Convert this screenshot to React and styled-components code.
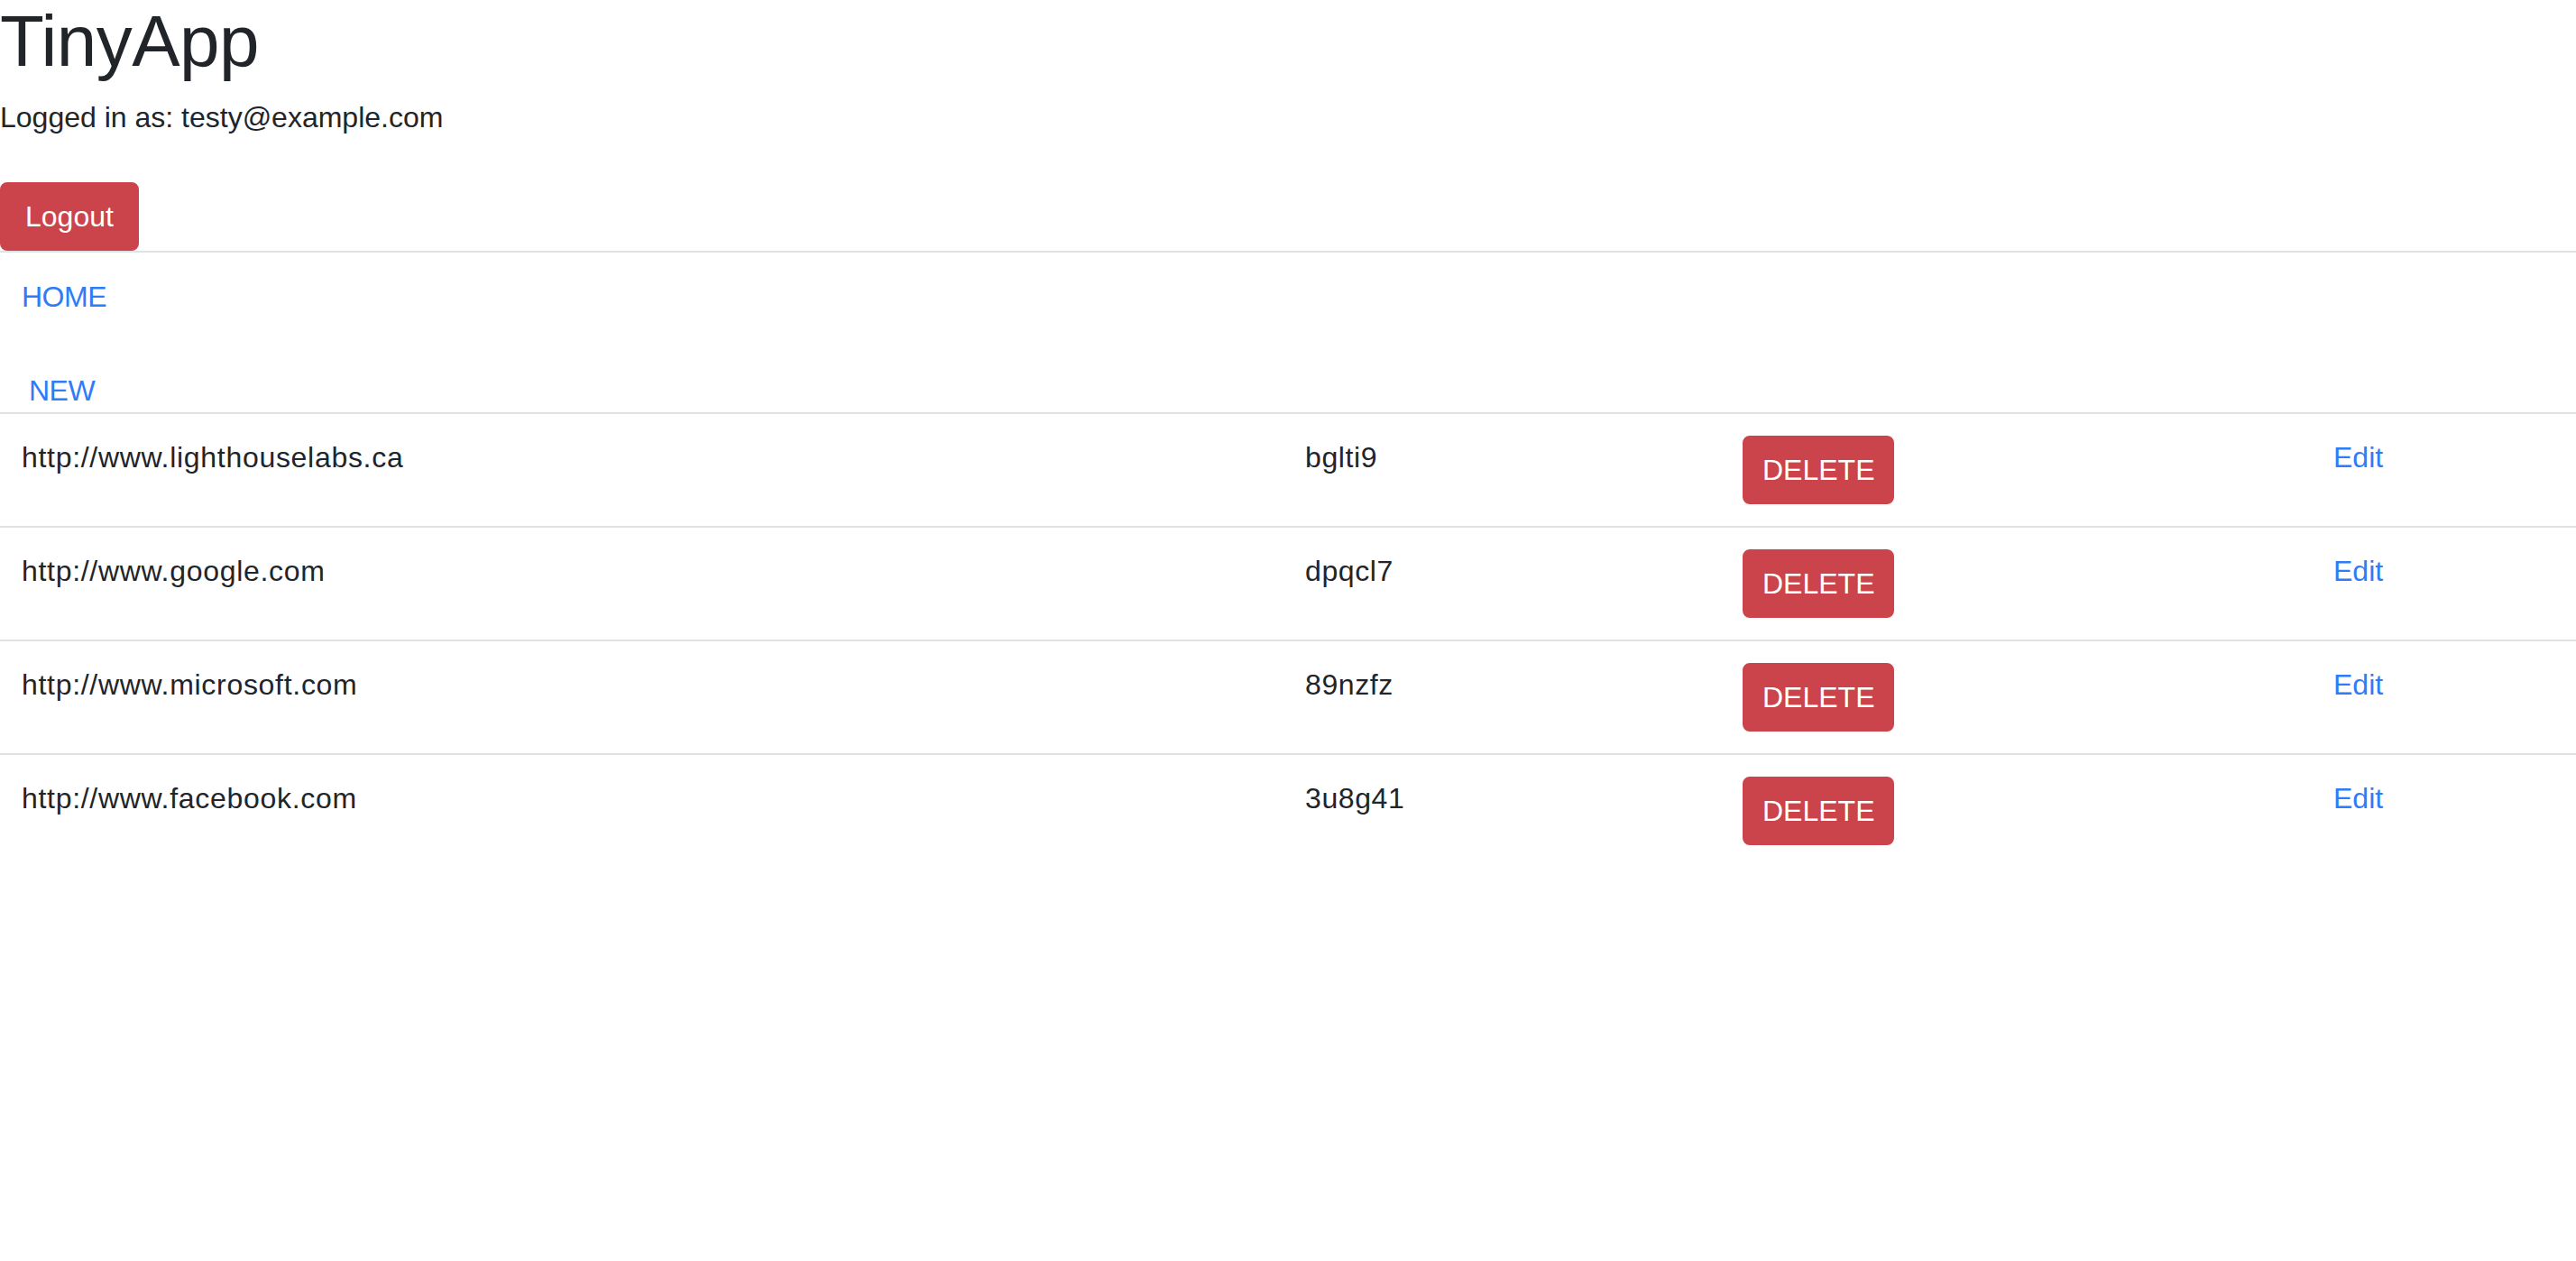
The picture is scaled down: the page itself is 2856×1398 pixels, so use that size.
import React from "react";
import styled, { createGlobalStyle } from "styled-components";

const GlobalStyle = createGlobalStyle`
  html, body {
    margin: 0;
    padding: 0;
    background: #ffffff;
  }
  body {
    font-family: "Liberation Sans", Arial, Helvetica, sans-serif;
    color: #212529;
    font-size: 32px;
    line-height: 48px;
  }
  * { box-sizing: border-box; }
`;

const Page = styled.div`
  width: 100%;
`;

const Header = styled.header`
  display: flex;
  flex-direction: column;
  align-items: flex-start;
  border-bottom: 2px solid #dee2e6;
`;

const Title = styled.h1`
  margin: 0 0 14px;
  font-size: 80px;
  line-height: 92px;
  font-weight: 400;
  letter-spacing: -0.5px;
  color: #212529;
`;

const Info = styled.p`
  margin: 0 0 48px;
  font-size: 32px;
  line-height: 48px;
`;

const DangerButton = styled.button`
  font-family: inherit;
  font-size: 32px;
  line-height: 48px;
  padding: 12px ${(p) => (p.$wide ? 26 : 20)}px;
  color: #ffffff;
  background: #cc444b;
  border: 2px solid #cc444b;
  border-radius: 8px;
  cursor: pointer;
`;

const Nav = styled.nav`
  display: flex;
  flex-direction: column;
  align-items: flex-start;
  padding-top: 25px;
  gap: 56px;
`;

const NavLink = styled.a`
  display: block;
  padding-left: ${(p) => p.$indent}px;
  font-size: 32px;
  line-height: 48px;
  letter-spacing: -0.5px;
  color: #2f7cf6;
  text-decoration: none;
`;

const Table = styled.div`
  display: flex;
  flex-direction: column;
`;

const Row = styled.div`
  display: grid;
  grid-template-columns: 1423px 485px 655px 1fr;
  border-top: 2px solid #dee2e6;
`;

const Cell = styled.div`
  padding: 24px;
  font-size: 32px;
  line-height: 48px;
  letter-spacing: ${(p) => p.$spacing || 0}px;
  color: #212529;
`;

const EditLink = styled.a`
  color: #2f7cf6;
  text-decoration: none;
`;

const urls = [
  { long: "http://www.lighthouselabs.ca", short: "bglti9" },
  { long: "http://www.google.com", short: "dpqcl7" },
  { long: "http://www.microsoft.com", short: "89nzfz" },
  { long: "http://www.facebook.com", short: "3u8g41" },
];

export default function App() {
  return (
    <Page>
      <GlobalStyle />
      <Header>
        <Title>TinyApp</Title>
        <Info>Logged in as: testy@example.com</Info>
        <DangerButton $wide>Logout</DangerButton>
      </Header>
      <Nav>
        <NavLink href="#" $indent={24}>HOME</NavLink>
        <NavLink href="#" $indent={32}>NEW</NavLink>
      </Nav>
      <Table>
        {urls.map((u) => (
          <Row key={u.short}>
            <Cell $spacing={0.7}>{u.long}</Cell>
            <Cell $spacing={0.6}>{u.short}</Cell>
            <Cell>
              <DangerButton>DELETE</DangerButton>
            </Cell>
            <Cell>
              <EditLink href="#">Edit</EditLink>
            </Cell>
          </Row>
        ))}
      </Table>
    </Page>
  );
}
